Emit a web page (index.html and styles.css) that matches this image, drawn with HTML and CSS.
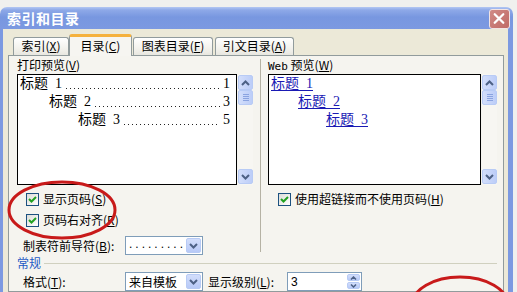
FILE: index.html
```html
<!DOCTYPE html>
<html lang="zh-CN">
<head>
    <meta charset="UTF-8">
    <title>索引和目录</title>
    <link rel="stylesheet" href="styles.css">
</head>
<body>
    <div class="window">
        <div class="titlebar">
            <span class="title">索引和目录</span>
            <span class="close">
                <svg width="21" height="20" viewBox="0 0 21 20">
                    <path d="M6 5 L15 14 M15 5 L6 14" stroke="#fff" stroke-width="2.4" stroke-linecap="round"/>
                </svg>
            </span>
        </div>
        <div class="frame">
            <div class="client">
                <div class="tabs">
                    <div class="tab tab-index">索引(<u>X</u>)</div>
                    <div class="tab tab-toc active">目录(<u>C</u>)</div>
                    <div class="tab tab-fig">图表目录(<u>F</u>)</div>
                    <div class="tab tab-cite">引文目录(<u>A</u>)</div>
                </div>
                <div class="panel">
                    <div class="columns">
                        <div class="col col-left">
                            <div class="label">打印预览(<u>V</u>)</div>
                            <div class="preview">
                                <div class="sheet">
                                    <div class="toc lvl1"><span>标题&ensp;1</span><span class="dots"></span><span>1</span></div>
                                    <div class="toc lvl2"><span>标题&ensp;2</span><span class="dots"></span><span>3</span></div>
                                    <div class="toc lvl3"><span>标题&ensp;3</span><span class="dots"></span><span>5</span></div>
                                </div>
                                <div class="scrollbar">
                                    <div class="sb-btn up"><svg width="9" height="6" viewBox="0 0 9 6"><path d="M1 5 L4.5 1.5 L8 5" stroke="#4d6185" stroke-width="2" fill="none"/></svg></div>
                                    <div class="sb-thumb"><i></i><i></i><i></i><i></i></div>
                                    <div class="sb-track"></div>
                                    <div class="sb-btn down"><svg width="9" height="6" viewBox="0 0 9 6"><path d="M1 1 L4.5 4.5 L8 1" stroke="#4d6185" stroke-width="2" fill="none"/></svg></div>
                                </div>
                            </div>
                            <div class="check-row">
                                <span class="checkbox"><svg width="11" height="11" viewBox="0 0 11 11"><path d="M2 5 L4.5 7.5 L9 3" stroke="#21a121" stroke-width="2" fill="none"/></svg></span>
                                <span>显示页码(<u>S</u>)</span>
                            </div>
                            <div class="check-row second">
                                <span class="checkbox"><svg width="11" height="11" viewBox="0 0 11 11"><path d="M2 5 L4.5 7.5 L9 3" stroke="#21a121" stroke-width="2" fill="none"/></svg></span>
                                <span>页码右对齐(<u>R</u>)</span>
                            </div>
                            <div class="field-row leader">
                                <span class="field-label">制表符前导符(<u>B</u>):</span>
                                <div class="select">
                                    <span class="select-text dotted">.........</span>
                                    <span class="select-btn"><svg width="9" height="6" viewBox="0 0 9 6"><path d="M1 1 L4.5 4.5 L8 1" stroke="#4d6185" stroke-width="2" fill="none"/></svg></span>
                                </div>
                            </div>
                        </div>
                        <div class="divider"></div>
                        <div class="col col-right">
                            <div class="label"><span class="latin">Web</span> 预览(<u>W</u>)</div>
                            <div class="preview">
                                <div class="sheet">
                                    <div class="web lvl1"><a>标题&ensp;1</a></div>
                                    <div class="web lvl2"><a>标题&ensp;2</a></div>
                                    <div class="web lvl3"><a>标题&ensp;3</a></div>
                                </div>
                                <div class="scrollbar">
                                    <div class="sb-btn up"><svg width="9" height="6" viewBox="0 0 9 6"><path d="M1 5 L4.5 1.5 L8 5" stroke="#4d6185" stroke-width="2" fill="none"/></svg></div>
                                    <div class="sb-thumb"><i></i><i></i><i></i><i></i></div>
                                    <div class="sb-track"></div>
                                    <div class="sb-btn down"><svg width="9" height="6" viewBox="0 0 9 6"><path d="M1 1 L4.5 4.5 L8 1" stroke="#4d6185" stroke-width="2" fill="none"/></svg></div>
                                </div>
                            </div>
                            <div class="check-row web-check">
                                <span class="checkbox"><svg width="11" height="11" viewBox="0 0 11 11"><path d="M2 5 L4.5 7.5 L9 3" stroke="#21a121" stroke-width="2" fill="none"/></svg></span>
                                <span>使用超链接而不使用页码(<u>H</u>)</span>
                            </div>
                        </div>
                    </div>
                    <div class="group">常规</div>
                    <div class="field-row format">
                        <span class="field-label">格式(<u>T</u>):</span>
                        <div class="select">
                            <span class="select-text">来自模板</span>
                            <span class="select-btn"><svg width="9" height="6" viewBox="0 0 9 6"><path d="M1 1 L4.5 4.5 L8 1" stroke="#4d6185" stroke-width="2" fill="none"/></svg></span>
                        </div>
                        <span class="field-label level">显示级别(<u>L</u>):</span>
                        <div class="spin">
                            <span class="spin-text">3</span>
                            <span class="spin-btns">
                                <span class="spin-btn"><svg width="7" height="4" viewBox="0 0 7 4"><path d="M1 3.5 L3.5 1 L6 3.5" stroke="#4d6185" stroke-width="1.5" fill="none"/></svg></span>
                                <span class="spin-btn"><svg width="7" height="4" viewBox="0 0 7 4"><path d="M1 0.5 L3.5 3 L6 0.5" stroke="#4d6185" stroke-width="1.5" fill="none"/></svg></span>
                            </span>
                        </div>
                    </div>
                </div>
            </div>
        </div>
    </div>

    <svg class="marks" width="517" height="292" viewBox="0 0 517 292">
        <ellipse cx="62" cy="210" rx="53" ry="28" fill="none" stroke="#c81a1a" stroke-width="3"/>
        <ellipse cx="460" cy="305" rx="48" ry="28" fill="none" stroke="#c81a1a" stroke-width="3"/>
    </svg>
</body>
</html>
```

FILE: styles.css
```css
* {
    margin: 0;
    padding: 0;
    box-sizing: border-box;
}

body {
    width: 517px;
    height: 292px;
    overflow: hidden;
    position: relative;
    background: #f0f0ee;
    font-family: "Noto Sans CJK SC", sans-serif;
    font-size: 12px;
    color: #000;
}

u {
    text-decoration: underline;
    text-underline-offset: 1px;
}

/* Window frame */
.window {
    width: 513px;
    height: 285px;
    margin-top: 7px;
    display: flex;
    flex-direction: column;
}

.titlebar {
    height: 23px;
    display: flex;
    align-items: center;
    justify-content: space-between;
    padding: 0 3px 0 7px;
    border-radius: 7px 7px 0 0;
    background: linear-gradient(#b3c7f3 0, #8ea9e8 3px, #7897e0 10px, #7c99e1 100%);
}

.title {
    color: #fff;
    font-size: 14px;
    font-weight: bold;
    line-height: 20px;
    letter-spacing: 0.5px;
}

.close {
    width: 21px;
    height: 20px;
    margin-top: 1px;
    border: 1px solid #f2e4e4;
    border-radius: 3px;
    background: linear-gradient(135deg, #d08a86, #c06a66);
    display: flex;
}

.close svg {
    margin: -1px 0 0 -1px;
}

.frame {
    flex: 1;
    display: flex;
    background: #7c99e1;
    padding: 0 5px 0 3px;
}

.client {
    flex: 1;
    display: flex;
    flex-direction: column;
    background: #ece9d8;
    padding: 5px 4px 0 5px;
}

/* Tabs */
.tabs {
    height: 21px;
    display: flex;
    align-items: flex-end;
    padding-left: 5px;
    position: relative;
    z-index: 1;
}

.tab {
    height: 18px;
    border: 1px solid #919b9c;
    border-bottom: none;
    border-radius: 3px 3px 0 0;
    background: linear-gradient(#ffffff, #f3f2ed 60%, #e8e7e0);
    text-align: center;
    line-height: 16px;
    margin-right: 1px;
}

.tab-index { width: 56px; margin-right: 0; }
.tab-toc { width: 63px; }
.tab-fig { width: 80px; margin-right: 2px; }
.tab-cite { width: 79px; }

.tab.active {
    height: 22px;
    margin-bottom: -1px;
    background: #f6f5f1;
    border-top: 3px solid #f5b13d;
    line-height: 18px;
}

.panel {
    flex: 1;
    border: 1px solid #919b9c;
    background: #f5f4ef;
    padding: 0 6px 0 8px;
}

/* Two preview columns */
.columns {
    height: 200px;
    display: flex;
}

.col-left {
    width: 236px;
}

.col-right {
    width: 229px;
}

.divider {
    width: 1px;
    background: #b5b2a4;
    margin: 3px 7px 4px;
}

.label {
    height: 18px;
    line-height: 18px;
}

.latin {
    font-family: "DejaVu Sans Mono", monospace;
    font-size: 11px;
}

.preview {
    height: 111px;
    display: flex;
}

.sheet {
    flex: 1;
    border: 1px solid #000;
    background: #fff;
    font-family: "Liberation Serif", "Noto Sans CJK SC", serif;
    font-size: 14px;
}

.toc {
    height: 18px;
    line-height: 18px;
    display: flex;
    padding-right: 6px;
}

.dots {
    flex: 1;
    margin: 0 3px 0 4px;
    background: linear-gradient(to right, #222 1px, transparent 1px) repeat-x;
    background-size: 4px 1px;
    background-position: left bottom 4px;
}

.lvl1 { padding-left: 2px; }
.lvl2 { padding-left: 31px; }
.lvl3 { padding-left: 60px; }

.web {
    height: 18px;
    line-height: 18px;
}

.web.lvl2 { padding-left: 29px; }
.web.lvl3 { padding-left: 57px; }

.web a {
    color: #1a1ab4;
    text-decoration: underline;
    text-underline-offset: 2px;
}

/* XP scrollbar */
.scrollbar {
    width: 15px;
    margin-left: 1px;
    padding: 1px 0;
    display: flex;
    flex-direction: column;
    background: #f7f6f2;
}

.sb-btn,
.sb-thumb {
    height: 15px;
    border: 1px solid #b8cbf5;
    border-radius: 2px;
    background: linear-gradient(to right, #d3defb, #bccdf8);
    display: flex;
    align-items: center;
    justify-content: center;
}

.sb-thumb {
    flex-direction: column;
    gap: 1px;
}

.sb-thumb i {
    width: 6px;
    height: 1px;
    background: #8aa3e0;
}

.sb-track {
    flex: 1;
}

/* Checkboxes */
.check-row {
    height: 16px;
    margin-top: 6px;
    display: flex;
    align-items: center;
    padding-left: 9px;
    line-height: 16px;
}

.check-row.second {
    margin-top: 5px;
}

.check-row.web-check {
    padding-left: 10px;
}

.checkbox {
    width: 13px;
    height: 13px;
    border: 1px solid #1c5180;
    background: linear-gradient(135deg, #dcdcd7, #ffffff);
    margin-right: 4px;
    display: flex;
}

/* Fields */
.field-row {
    height: 19px;
    display: flex;
    align-items: center;
}

.field-row.leader {
    margin-top: 8px;
}

.field-row.format {
    margin-top: 2px;
}

.field-label {
    width: 108px;
    padding-left: 6px;
}

.field-label.level {
    width: 84px;
    padding-left: 5px;
}

.select,
.spin {
    height: 19px;
    border: 1px solid #7f9db9;
    background: #fff;
    display: flex;
    align-items: center;
}

.select {
    width: 78px;
}

.select-text {
    flex: 1;
    padding-left: 3px;
}

.select-text.dotted {
    letter-spacing: 3px;
    font-family: "Liberation Sans", sans-serif;
    padding-bottom: 4px;
}

.select-btn {
    width: 15px;
    height: 15px;
    margin-right: 1px;
    border: 1px solid #b8cbf5;
    border-radius: 2px;
    background: linear-gradient(#d3defb, #b7c9f7);
    display: flex;
    align-items: center;
    justify-content: center;
}

.spin {
    width: 75px;
}

.spin-text {
    flex: 1;
    padding-left: 3px;
    font-family: "Liberation Sans", sans-serif;
}

.spin-btns {
    width: 13px;
    height: 15px;
    margin-right: 1px;
    display: flex;
    flex-direction: column;
    gap: 1px;
}

.spin-btn {
    flex: 1;
    border: 1px solid #b8cbf5;
    border-radius: 2px;
    background: linear-gradient(#d3defb, #b7c9f7);
    display: flex;
    align-items: center;
    justify-content: center;
}

/* Group header */
.group {
    height: 14px;
    line-height: 14px;
    color: #1f5bc6;
    display: flex;
    align-items: center;
}

.group::after {
    content: "";
    flex: 1;
    height: 1px;
    margin-left: 3px;
    background: #d0d0bf;
}

/* Red annotation marks */
.marks {
    position: absolute;
    left: 0;
    top: 0;
    pointer-events: none;
}
```
